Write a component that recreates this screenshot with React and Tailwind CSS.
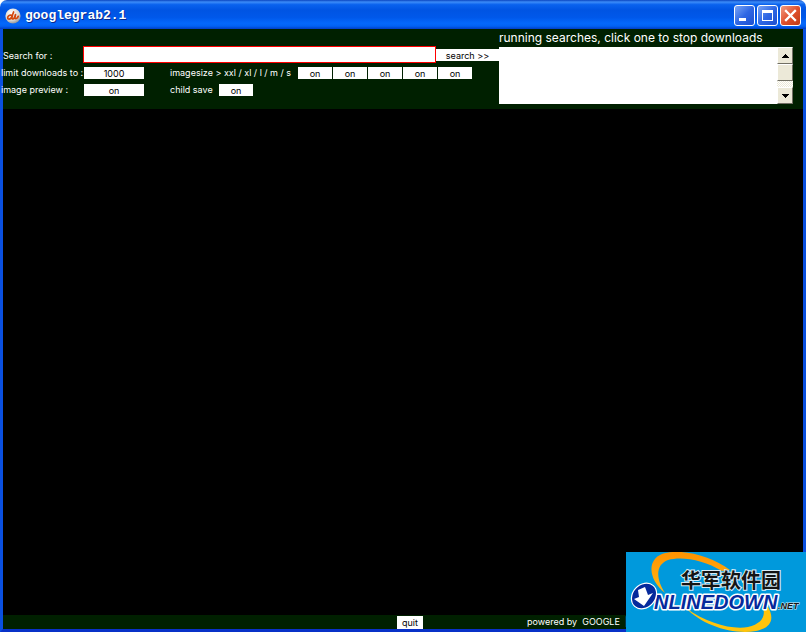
import React from "react";

const toggle =
  "h-3 bg-white text-center text-[9px] leading-3 text-black pt-px overflow-hidden";

const sizes = ["xxl", "xl", "l", "m", "s"];

function DirectorIcon() {
  return (
    <svg viewBox="0 0 16 16" className="h-4 w-4" aria-hidden="true">
      <defs>
        <radialGradient id="ball" cx="0.4" cy="0.3" r="0.75">
          <stop offset="0" stopColor="#ffffff" />
          <stop offset="0.65" stopColor="#d9d6d2" />
          <stop offset="1" stopColor="#85888f" />
        </radialGradient>
      </defs>
      <circle cx="8" cy="8" r="7.6" fill="url(#ball)" />
      <path
        d="M6.800 7.400C4.600 6.600 2.600 8 2.700 9.900c.1 1.800 2.700 1.500 3.800-.4L8.600 4M7.600 6.600L6.900 9.800c0 1.600 1.600 1.500 2.500 0L10.500 6.500M10.500 6.500l-.6 3c.2 1.900 2.800 1 3.300-1.200"
        fill="none"
        stroke="#d4480c"
        strokeWidth="1.700"
        strokeLinecap="round"
        strokeLinejoin="round"
      />
    </svg>
  );
}

function CaptionButton({ label, close, children }) {
  return (
    <button
      type="button"
      aria-label={label}
      className={
        "h-[21px] w-[21px] rounded-[3px] border border-white bg-linear-to-br " +
        (close
          ? "from-[#f09a80] via-[#e0502c] to-[#c03a14]"
          : "from-[#7ba4f4] via-[#2f67e4] to-[#1d4fd0]")
      }
    >
      <svg viewBox="0 0 19 19" className="block h-[19px] w-[19px]" aria-hidden="true">
        {children}
      </svg>
    </button>
  );
}

function TitleBar() {
  return (
    <header className="flex h-[29px] shrink-0 items-center rounded-t-[7px] bg-[linear-gradient(180deg,#0a45c0_0%,#3c8cf8_7%,#0a62ee_16%,#0054e3_35%,#0058ea_60%,#0468fc_80%,#0262f4_90%,#003dc4_100%)] pl-[5px] pr-[5px] pt-[2px]">
      <DirectorIcon />
      <h1 className="ml-1 flex-1 font-['Liberation_Mono','DejaVu_Sans_Mono',monospace] text-[13px] leading-4 font-bold text-white [text-shadow:1px_1px_0_#0a2a8c]">
        googlegrab2.1
      </h1>
      <div className="flex gap-[2px]">
        <CaptionButton label="Minimize">
          <rect x="4" y="12" width="7" height="3" fill="#fff" />
        </CaptionButton>
        <CaptionButton label="Maximize">
          <path d="M4 4h11v11H4zM5 7v7h9V7z" fill="#fff" fillRule="evenodd" />
        </CaptionButton>
        <CaptionButton label="Close" close>
          <path d="M5 5l9 9M14 5l-9 9" stroke="#fff" strokeWidth="2.300" strokeLinecap="square" />
        </CaptionButton>
      </div>
    </header>
  );
}

const bevel =
  "flex w-4 items-center justify-center border border-t-white border-l-white border-r-[#716f64] border-b-[#716f64] bg-[#ece9d8]";

function RunningSearches() {
  return (
    <section className="flex min-w-0 flex-1 flex-col">
      <h2 className="h-[18px] text-[12px] leading-[18px] whitespace-nowrap text-white">
        running searches, click one to stop downloads
      </h2>
      <div className="flex h-[57px] bg-white">
        <ul aria-label="running searches" className="flex-1" />
        <div className="flex w-4 flex-col bg-[repeating-conic-gradient(#ffffff_0_25%,#ece9d8_0_50%)] bg-[length:2px_2px]">
          <button type="button" aria-label="Scroll up" className={bevel + " h-[17px]"}>
            <svg viewBox="0 0 7 4" className="h-1 w-[7px]" shapeRendering="crispEdges">
              <path d="M3 0h1v1h1v1h1v1h1v1H0V3h1V2h1V1h1z" />
            </svg>
          </button>
          <div className={bevel + " h-[17px]"} />
          <div className="flex-1" />
          <button type="button" aria-label="Scroll down" className={bevel + " h-[17px]"}>
            <svg viewBox="0 0 7 4" className="h-1 w-[7px]" shapeRendering="crispEdges">
              <path d="M0 0h7v1H6v1H5v1H4v1H3V3H2V2H1V1H0z" />
            </svg>
          </button>
        </div>
      </div>
    </section>
  );
}

function SearchForm() {
  return (
    <form
      className="flex w-[496px] shrink-0 flex-col pt-[17px] text-[9px] leading-3 text-white"
      onSubmit={(e) => e.preventDefault()}
    >
      <div className="flex h-[17px] items-center">
        <label htmlFor="query" className="w-20 pt-[2px] whitespace-nowrap">
          Search for :
        </label>
        <div className="flex h-[17px] min-w-0 flex-1 bg-[#ff0000] p-px">
          <input
            id="query"
            type="text"
            className="min-w-0 flex-1 bg-white px-1 text-black outline-none"
          />
        </div>
        <button type="submit" className="h-3 w-[63px] bg-white pt-px text-black">
          search &gt;&gt;
        </button>
      </div>
      <div className="mt-1 flex h-3">
        <label htmlFor="limit" className="-ml-0.5 w-[83px] whitespace-nowrap">
          limit downloads to :
        </label>
        <input id="limit" type="text" defaultValue="1000" className={toggle + " w-[60px]"} />
        <span className="ml-[26px] w-32 whitespace-nowrap">
          imagesize &gt; xxl / xl / l / m / s
        </span>
        <div className="flex gap-px">
          {sizes.map((s) => (
            <button key={s} type="button" aria-label={"size " + s} className={toggle + " w-[34px]"}>
              on
            </button>
          ))}
        </div>
      </div>
      <div className="mt-[5px] flex h-3">
        <label htmlFor="preview" className="-ml-0.5 w-[83px] whitespace-nowrap">
          image preview :
        </label>
        <button id="preview" type="button" className={toggle + " w-[60px]"}>
          on
        </button>
        <label htmlFor="child" className="ml-[26px] w-[49px] whitespace-nowrap">
          child save
        </label>
        <button id="child" type="button" className={toggle + " w-[34px]"}>
          on
        </button>
      </div>
    </form>
  );
}

function OnlineDownLogo() {
  return (
    <svg
      viewBox="0 0 180 80"
      className="absolute right-0 bottom-0 h-20 w-[180px] bg-[#0099dc]"
      role="img"
      aria-label="华军软件园 ONLINEDOWN.NET"
    >
      <defs>
        <linearGradient id="swoosh" x1="0" y1="0" x2="0" y2="1">
          <stop offset="0" stopColor="#ff9200" />
          <stop offset="1" stopColor="#ffb814" />
        </linearGradient>
      </defs>
      <path
        d="M39 41C22 27 21 8 36 2c18-6 48 1 68 16l-8 1C78 8 56 4 42 8 29 13 30 27 39 41z"
        fill="url(#swoosh)"
      />
      <path
        d="M60 56c20 15 46 22 62 19 13-3 18-10 15-20h5c7 12 3 21-12 24-24 4-54-6-70-23z"
        fill="#ffc40c"
      />
      <text
        x="55"
        y="36"
        fontSize="20"
        fontWeight="700"
        fill="#151515"
        stroke="#d8ecf6"
        strokeWidth="2"
        paintOrder="stroke"
        className="font-['Noto_Sans_CJK_SC',sans-serif]"
      >
        华军软件园
      </text>
      <text
        x="28"
        y="57"
        fontSize="20"
        fontWeight="700"
        fontStyle="italic"
        fill="#062a9c"
        stroke="#fff"
        strokeWidth="3"
        strokeLinejoin="round"
        paintOrder="stroke"
        className="font-['Liberation_Sans',Arial,sans-serif]"
      >
        NLINEDOWN
      </text>
      <text
        x="152"
        y="57"
        fontSize="9"
        fontWeight="700"
        fontStyle="italic"
        fill="#151515"
        stroke="#d8ecf6"
        strokeWidth="1"
        paintOrder="stroke"
        className="font-['Liberation_Sans',Arial,sans-serif]"
      >
        .NET
      </text>
      <ellipse cx="18" cy="44" rx="14.500" ry="12" transform="rotate(-48 18 44)" fill="#fff" />
      <ellipse cx="18" cy="44" rx="13.300" ry="10.800" transform="rotate(-48 18 44)" fill="#062a9c" />
      <path d="M12 38l7-3 3 8 5-2-9 13-10-7 5-2z" fill="#fff" />
    </svg>
  );
}

export default function App() {
  return (
    <div className="relative flex h-screen min-h-60 w-full flex-col overflow-hidden bg-white font-[Inter,'Liberation_Sans',sans-serif]">
      <TitleBar />
      <main className="flex flex-1 flex-col border-x-[3px] border-b-[3px] border-x-[#0a50e0] border-b-[#0831c8] bg-black">
        <div className="flex h-20 bg-[#002000] pr-[10px]">
          <SearchForm />
          <RunningSearches />
        </div>
        <div className="flex-1 bg-black" />
        <footer className="grid h-[14px] grid-cols-[1fr_26px_1fr] items-end bg-[#002000] pl-[14px] text-[9px] leading-3 text-white">
          <span />
          <button type="button" className="h-[13px] bg-white text-black">
            quit
          </button>
          <p className="pb-px pl-[104px] whitespace-nowrap">
            powered by&nbsp; GOOGLE&nbsp; |
          </p>
        </footer>
      </main>
      <OnlineDownLogo />
    </div>
  );
}
